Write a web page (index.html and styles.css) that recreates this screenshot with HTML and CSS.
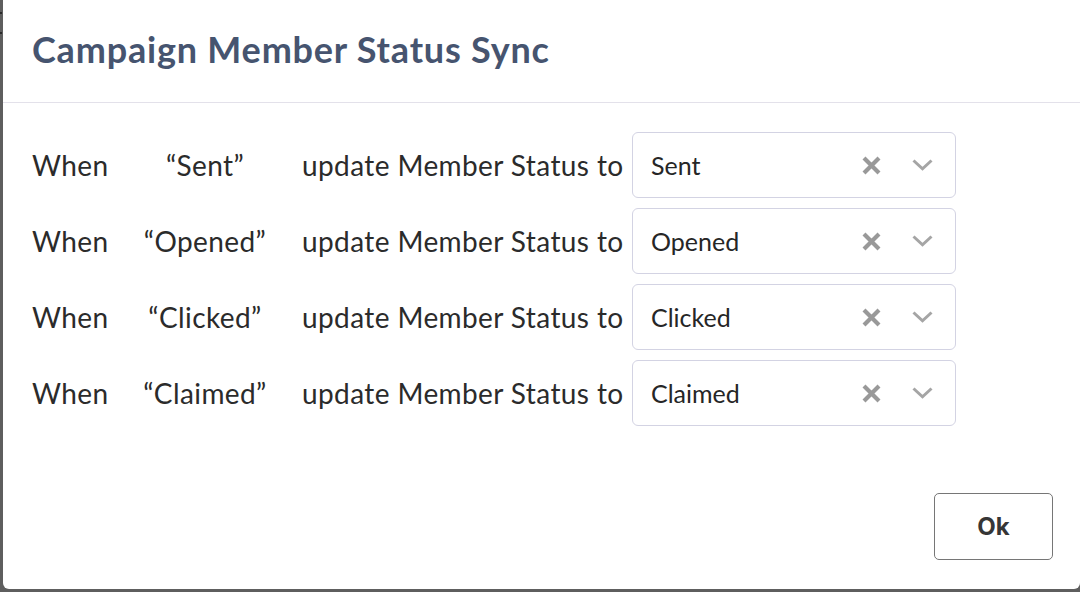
FILE: index.html
```html
<!DOCTYPE html>
<html>
<head>
<meta charset="utf-8">
<link rel="stylesheet" href="styles.css">
</head>
<body>
<div class="backdrop">
  <div class="marks"></div>
  <div class="dialog">
    <div class="header">
      <h1 class="title">Campaign Member Status Sync</h1>
    </div>
    <div class="body">
      <div class="row">
        <span class="when">When</span>
        <span class="event">“Sent”</span>
        <span class="update">update Member Status to</span>
        <div class="select">
          <span class="value">Sent</span>
          <span class="clear"><svg width="19" height="19" viewBox="0 0 19 19"><path d="M2 2L17 17M17 2L2 17" stroke="#999" stroke-width="4.2"/></svg></span>
          <span class="chev"><svg width="21" height="12" viewBox="0 0 21 12"><path d="M1.5 1.5L10.5 9.8L19.5 1.5" fill="none" stroke="#a5a5a5" stroke-width="3"/></svg></span>
        </div>
      </div>
      <div class="row">
        <span class="when">When</span>
        <span class="event">“Opened”</span>
        <span class="update">update Member Status to</span>
        <div class="select">
          <span class="value">Opened</span>
          <span class="clear"><svg width="19" height="19" viewBox="0 0 19 19"><path d="M2 2L17 17M17 2L2 17" stroke="#999" stroke-width="4.2"/></svg></span>
          <span class="chev"><svg width="21" height="12" viewBox="0 0 21 12"><path d="M1.5 1.5L10.5 9.8L19.5 1.5" fill="none" stroke="#a5a5a5" stroke-width="3"/></svg></span>
        </div>
      </div>
      <div class="row">
        <span class="when">When</span>
        <span class="event">“Clicked”</span>
        <span class="update">update Member Status to</span>
        <div class="select">
          <span class="value">Clicked</span>
          <span class="clear"><svg width="19" height="19" viewBox="0 0 19 19"><path d="M2 2L17 17M17 2L2 17" stroke="#999" stroke-width="4.2"/></svg></span>
          <span class="chev"><svg width="21" height="12" viewBox="0 0 21 12"><path d="M1.5 1.5L10.5 9.8L19.5 1.5" fill="none" stroke="#a5a5a5" stroke-width="3"/></svg></span>
        </div>
      </div>
      <div class="row">
        <span class="when">When</span>
        <span class="event">“Claimed”</span>
        <span class="update">update Member Status to</span>
        <div class="select">
          <span class="value">Claimed</span>
          <span class="clear"><svg width="19" height="19" viewBox="0 0 19 19"><path d="M2 2L17 17M17 2L2 17" stroke="#999" stroke-width="4.2"/></svg></span>
          <span class="chev"><svg width="21" height="12" viewBox="0 0 21 12"><path d="M1.5 1.5L10.5 9.8L19.5 1.5" fill="none" stroke="#a5a5a5" stroke-width="3"/></svg></span>
        </div>
      </div>
    </div>
    <div class="footer">
      <button class="ok">Ok</button>
    </div>
  </div>
</div>
</body>
</html>
```

FILE: styles.css
```css
html, body {
  margin: 0;
  padding: 0;
  width: 1080px;
  height: 592px;
  overflow: hidden;
  background: #5e5e5e;
}
.backdrop {
  position: relative;
  width: 1080px;
  height: 592px;
  display: flex;
  align-items: flex-start;
  padding-left: 3px;
  box-sizing: border-box;
}
.marks {
  position: absolute;
  left: 0;
  top: 12px;
  width: 2px;
  height: 22px;
  border-top: 2px solid #2a2a2a;
  border-bottom: 2px solid #2a2a2a;
  box-sizing: border-box;
}
.dialog {
  width: 1077px;
  height: 589px;
  background: #fff;
  border-radius: 0 0 6px 6px;
  display: flex;
  flex-direction: column;
  font-family: "Lato", "Liberation Sans", sans-serif;
  color: #2b2b2b;
}
.header {
  height: 102px;
  border-bottom: 1px solid #e3e1ea;
  padding-left: 29px;
  display: flex;
  align-items: center;
}
.title {
  margin: 0;
  font-family: "Lato", sans-serif;
  font-weight: 700;
  font-size: 36px;
  color: #46546f;
  letter-spacing: 0.8px;
  padding-bottom: 5px;
}
.body {
  padding-top: 29px;
  display: flex;
  flex-direction: column;
  gap: 10px;
}
.row {
  display: flex;
  align-items: center;
  height: 66px;
  font-size: 28px;
  letter-spacing: 0.4px;
}
.when {
  width: 76px;
  padding-left: 29px;
}
.event {
  width: 194px;
  text-align: center;
}
.update {
  width: 330px;
}
.select {
  width: 324px;
  height: 66px;
  border: 1px solid #d3d3e3;
  border-radius: 6px;
  display: flex;
  align-items: center;
  padding-left: 18px;
  box-sizing: border-box;
  letter-spacing: 0;
}
.value {
  flex: 1;
  font-size: 25px;
  color: #262626;
}
.clear {
  display: flex;
  width: 19px;
  margin-right: 31px;
}
.chev {
  display: flex;
  width: 21px;
  margin-right: 22px;
}
.footer {
  margin-top: auto;
  display: flex;
  justify-content: flex-end;
  padding: 0 27px 29px 0;
}
.ok {
  width: 119px;
  height: 67px;
  background: #fff;
  border: 1px solid #767676;
  border-radius: 5px;
  font-family: "Inter", "Lato", sans-serif;
  font-weight: 700;
  font-size: 24px;
  color: #363636;
}
```
